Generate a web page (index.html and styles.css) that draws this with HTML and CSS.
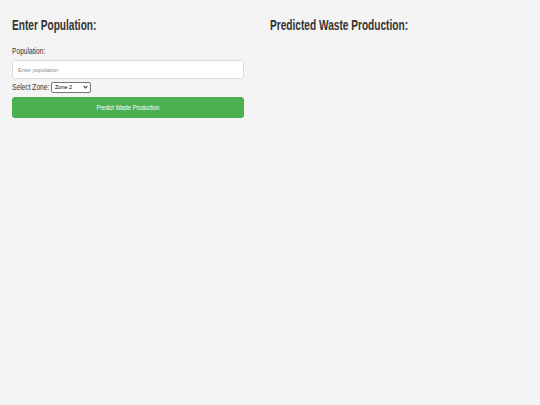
FILE: index.html
```html
<!DOCTYPE html>
<html lang="en">
<head>
    <meta charset="UTF-8">
    <meta name="viewport" content="width=device-width, initial-scale=1.0">
    <title>Waste Production Predictor</title>
    <link rel="stylesheet" href="styles.css">
</head>
<body>
    <div class="container">
        <div class="input-section">
            <h2>Enter Population:</h2>
            <form id="predictForm">
                <label for="population">Population:</label>
                <input type="text" id="population" name="population" placeholder="Enter population">
                <div class="zone-row">
                    <label for="zone">Select Zone:</label>
                    <span class="select-wrap">
                        <select id="zone" name="zone">
                            <option value="1">Zone 1</option>
                            <option value="2" selected>Zone 2</option>
                            <option value="3">Zone 3</option>
                        </select>
                    </span>
                </div>
                <button type="submit"><span>Predict Waste Production</span></button>
            </form>
        </div>
        <div class="output-section">
            <h2>Predicted Waste Production:</h2>
            <div id="result"></div>
        </div>
    </div>
</body>
</html>
```

FILE: styles.css
```css
body {
    font-family: "Liberation Sans", Arial, sans-serif;
    background-color: #f4f4f4;
    color: #333;
    margin: 0;
    padding: 0 12px;
}
.container {
    display: grid;
    grid-template-columns: 232px 1fr;
    column-gap: 26px;
}
h2 {
    font-size: 15px;
    line-height: 16px;
    margin: 17px 0 0;
    color: #333;
    white-space: nowrap;
    transform: scaleX(0.675);
    transform-origin: left center;
}
label {
    display: block;
    font-size: 9.5px;
    line-height: 10px;
    margin-top: 13px;
    white-space: nowrap;
    transform: scaleX(0.7);
    transform-origin: left center;
}
input[type="text"] {
    display: block;
    box-sizing: border-box;
    width: 100%;
    height: 19px;
    margin-top: 4px;
    padding: 0 5px;
    border: 1px solid #ddd;
    border-radius: 3px;
    background: #fff;
    font-family: inherit;
    font-size: 5.5px;
}
input::placeholder {
    color: #8a8a8a;
}
.zone-row {
    display: flex;
    align-items: center;
    gap: 2px;
    margin-top: 2px;
    height: 12px;
}
.zone-row label {
    width: 37px;
    margin-top: 0;
    line-height: 12px;
}
.select-wrap {
    position: relative;
    display: block;
    height: 11px;
}
.select-wrap::after {
    content: "";
    position: absolute;
    right: 4px;
    top: 3px;
    width: 2px;
    height: 2px;
    border-right: 1.3px solid #222;
    border-bottom: 1.3px solid #222;
    transform: rotate(45deg);
    pointer-events: none;
}
select {
    -webkit-appearance: none;
    appearance: none;
    display: block;
    box-sizing: border-box;
    width: 40px;
    height: 11px;
    padding: 0 0 0 3px;
    font-family: inherit;
    font-size: 5.5px;
    color: #000;
    border: 1px solid #767676;
    border-radius: 2px;
    background: #fff;
}
button {
    display: block;
    width: 100%;
    height: 21px;
    margin-top: 4px;
    background-color: #4caf50;
    color: #fff;
    border: none;
    border-radius: 3px;
    font-family: inherit;
    font-size: 8px;
    cursor: pointer;
}
button span {
    display: inline-block;
    white-space: nowrap;
    transform: scaleX(0.7);
}
button:hover {
    background-color: #45a049;
}
```
